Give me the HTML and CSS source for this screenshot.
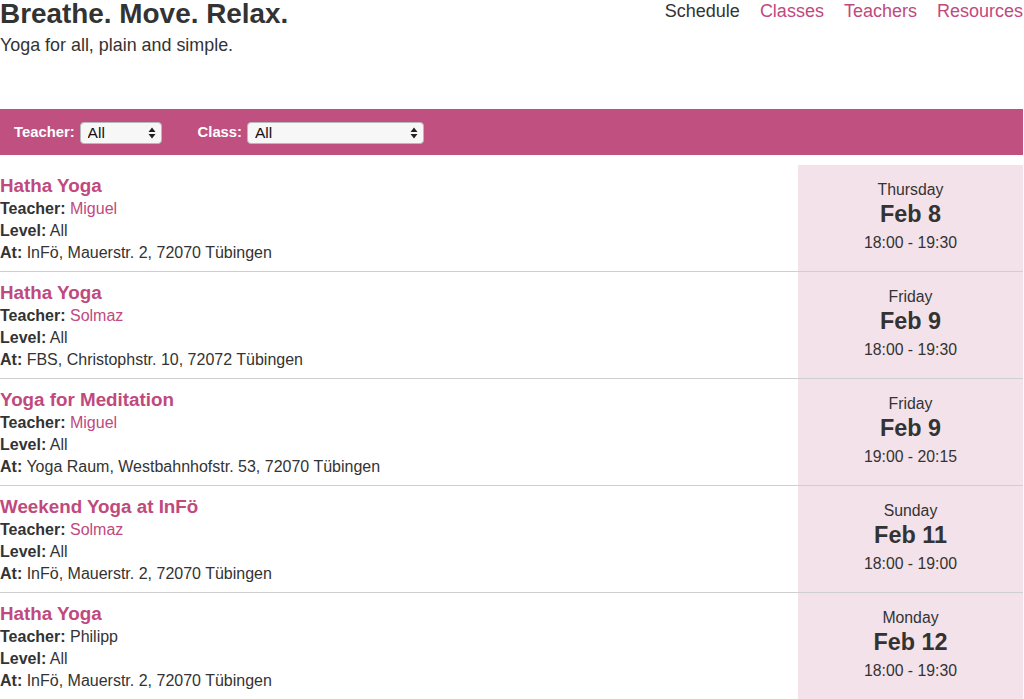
FILE: index.html
```html
<!DOCTYPE html>
<html lang="en">
<head>
<meta charset="utf-8">
<title>Breathe. Move. Relax.</title>
<link rel="stylesheet" href="styles.css">
</head>
<body>
<div class="page">
  <header class="site-header">
    <div class="brand">
      <h1 class="site-title">Breathe. Move. Relax.</h1>
      <p class="tagline">Yoga for all, plain and simple.</p>
    </div>
    <nav class="main-nav">
      <span class="nav-item current">Schedule</span>
      <a class="nav-item" href="#">Classes</a>
      <a class="nav-item" href="#">Teachers</a>
      <a class="nav-item" href="#">Resources</a>
    </nav>
  </header>

  <form class="filters">
    <label class="filter">
      <span class="filter-label">Teacher:</span>
      <select class="select select-teacher"><option>All</option></select>
    </label>
    <label class="filter">
      <span class="filter-label">Class:</span>
      <select class="select select-class"><option>All</option></select>
    </label>
  </form>

  <ul class="schedule">
    <li class="event">
      <div class="event-info">
        <a class="event-title" href="#">Hatha Yoga</a>
        <div class="event-line"><b>Teacher:</b> <a href="#">Miguel</a></div>
        <div class="event-line"><b>Level:</b> All</div>
        <div class="event-line"><b>At:</b> InFö, Mauerstr. 2, 72070 Tübingen</div>
      </div>
      <div class="event-date">
        <div class="day">Thursday</div>
        <div class="date">Feb 8</div>
        <div class="time">18:00 - 19:30</div>
      </div>
    </li>
    <li class="event">
      <div class="event-info">
        <a class="event-title" href="#">Hatha Yoga</a>
        <div class="event-line"><b>Teacher:</b> <a href="#">Solmaz</a></div>
        <div class="event-line"><b>Level:</b> All</div>
        <div class="event-line"><b>At:</b> FBS, Christophstr. 10, 72072 Tübingen</div>
      </div>
      <div class="event-date">
        <div class="day">Friday</div>
        <div class="date">Feb 9</div>
        <div class="time">18:00 - 19:30</div>
      </div>
    </li>
    <li class="event">
      <div class="event-info">
        <a class="event-title" href="#">Yoga for Meditation</a>
        <div class="event-line"><b>Teacher:</b> <a href="#">Miguel</a></div>
        <div class="event-line"><b>Level:</b> All</div>
        <div class="event-line"><b>At:</b> Yoga Raum, Westbahnhofstr. 53, 72070 Tübingen</div>
      </div>
      <div class="event-date">
        <div class="day">Friday</div>
        <div class="date">Feb 9</div>
        <div class="time">19:00 - 20:15</div>
      </div>
    </li>
    <li class="event">
      <div class="event-info">
        <a class="event-title" href="#">Weekend Yoga at InFö</a>
        <div class="event-line"><b>Teacher:</b> <a href="#">Solmaz</a></div>
        <div class="event-line"><b>Level:</b> All</div>
        <div class="event-line"><b>At:</b> InFö, Mauerstr. 2, 72070 Tübingen</div>
      </div>
      <div class="event-date">
        <div class="day">Sunday</div>
        <div class="date">Feb 11</div>
        <div class="time">18:00 - 19:00</div>
      </div>
    </li>
    <li class="event">
      <div class="event-info">
        <a class="event-title" href="#">Hatha Yoga</a>
        <div class="event-line"><b>Teacher:</b> Philipp</div>
        <div class="event-line"><b>Level:</b> All</div>
        <div class="event-line"><b>At:</b> InFö, Mauerstr. 2, 72070 Tübingen</div>
      </div>
      <div class="event-date">
        <div class="day">Monday</div>
        <div class="date">Feb 12</div>
        <div class="time">18:00 - 19:30</div>
      </div>
    </li>
  </ul>
</div>
</body>
</html>
```

FILE: styles.css
```css
html, body {
  margin: 0;
  padding: 0;
  background: #fff;
}

body {
  font-family: "Liberation Sans", Arial, Helvetica, sans-serif;
  color: #333;
  font-size: 16px;
}

a {
  color: #c0497e;
  text-decoration: none;
}

.page {
  margin-right: 1px;
}

/* Header */
.site-header {
  display: flex;
  justify-content: space-between;
  align-items: flex-start;
  height: 109px;
}

.site-title {
  margin: 0;
  font-size: 27.9px;
  line-height: 28px;
  font-weight: bold;
  color: #333;
}

.tagline {
  margin: 5px 0 0;
  font-size: 17.9px;
  line-height: 24px;
}

.main-nav {
  display: flex;
  gap: 20px;
  font-size: 18px;
  line-height: 22px;
}

.nav-item.current {
  color: #333;
}

/* Filters */
.filters {
  display: flex;
  align-items: center;
  gap: 36px;
  height: 46px;
  margin: 0 0 10px;
  padding: 0 14px;
  background: #c0507f;
}

.filter {
  display: flex;
  align-items: center;
  gap: 5px;
}

.filter-label {
  color: #fff;
  font-weight: bold;
  font-size: 14.8px;
}

.select {
  -webkit-appearance: none;
  appearance: none;
  height: 22px;
  margin: 1px 0 0;
  padding: 0 0 0 7px;
  border: 1px solid #b9b9b9;
  border-radius: 4px;
  background-color: #f7f7f7;
  background-image: url("data:image/svg+xml;utf8,<svg xmlns='http://www.w3.org/2000/svg' width='8' height='12' viewBox='0 0 8 12'><path d='M4 0.5 L7.5 5 L0.5 5 Z M4 11.5 L7.5 7 L0.5 7 Z' fill='%23222'/></svg>");
  background-repeat: no-repeat;
  background-position: right 5px center;
  font-family: "Liberation Sans", Arial, sans-serif;
  font-size: 15.5px;
  color: #111;
}

.select-teacher {
  width: 82px;
}

.select-class {
  width: 177px;
}

/* Schedule */
.schedule {
  list-style: none;
  margin: 0;
  padding: 0;
}

.event {
  display: flex;
  border-bottom: 1px solid #cfcfcf;
}

.event-info {
  flex: 1;
  padding: 10px 0 7px;
}

.event-title {
  display: block;
  margin-bottom: 2px;
  font-weight: bold;
  font-size: 18.8px;
  line-height: 21px;
}

.event-line {
  font-size: 16px;
  line-height: 22px;
}

.event-date {
  width: 225px;
  box-sizing: border-box;
  padding-top: 15px;
  background: #f4e2ea;
  text-align: center;
}

.day {
  font-size: 15.8px;
  line-height: 20px;
}

.date {
  font-weight: bold;
  font-size: 23.4px;
  line-height: 28px;
}

.time {
  font-size: 15.8px;
  line-height: 30px;
}
```
